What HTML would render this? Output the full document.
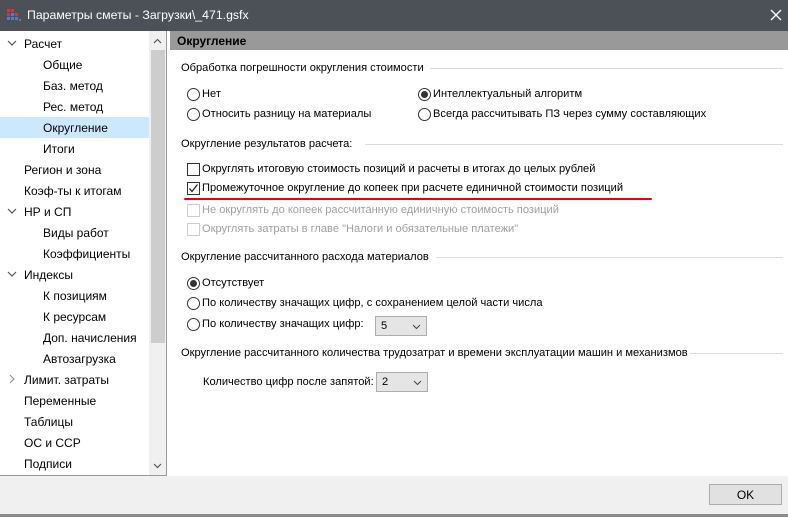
<!DOCTYPE html>
<html><head><meta charset="utf-8"><style>
*{margin:0;padding:0;box-sizing:border-box}
body{width:788px;height:517px;position:relative;overflow:hidden;background:#fff;font-family:"Liberation Sans","DejaVu Sans",sans-serif;font-size:11.1px;color:#000}
.a{position:absolute;white-space:nowrap}
.title{left:0;top:0;width:788px;height:31px;background:#4b5157;color:#fff;font-size:12.3px}
.tree{left:0;top:31px;width:167px;height:445px;border-right:1px solid #999;border-bottom:1px solid #999}
.sb{left:149px;top:31px;width:17px;height:444px;background:#f0f0f0}
.thumb{left:151px;top:50px;width:14px;height:293px;background:#cdcdcd}
.t{font-size:12px}
.hdr{left:170px;top:31px;width:618px;height:19px;background:#999;font-weight:bold;font-size:12px;padding:3px 7px}
.line{height:1px;background:#dcdcdc}
.rb{width:13px;height:13px;border:1px solid #333;border-radius:50%;background:#fff}
.rb.on::after{content:"";position:absolute;left:2px;top:2px;width:7px;height:7px;border-radius:50%;background:#333}
.cb{width:13px;height:13px;border:1px solid #333;background:#fff}
.cb.dis{border-color:#ccc}
.dis{color:#a0a0a0}
.sel{width:52px;height:20px;background:#e5e5e5;border:1px solid #adadad;padding:3px 5px}
.bottom{left:0;top:476px;width:788px;height:41px;background:#f0f0f0}
.ok{left:709px;top:484px;width:73px;height:21px;background:#e1e1e1;border:1px solid #adadad;text-align:center;padding-top:3px;font-size:12px}
</style></head><body>
<div class="a title">
 <svg class="a" style="left:7px;top:9px" width="14" height="13"><g fill="#d33"><rect x="0" y="0" width="3" height="3"/><rect x="4" y="0" width="3" height="3"/><rect x="0" y="4" width="3" height="3"/><rect x="8" y="4" width="3" height="3"/></g><g fill="#4a7fd8"><rect x="4" y="4" width="3" height="3"/><rect x="0" y="8" width="3" height="3"/><rect x="4" y="8" width="3" height="3"/><rect x="8" y="8" width="3" height="3"/><rect x="12" y="10" width="2" height="2"/></g></svg>
 <span class="a" style="left:27px;top:8px">Параметры сметы - Загрузки\_471.gsfx</span>
 <svg class="a" style="left:770px;top:9px" width="12" height="12"><path d="M1 1L11 11M11 1L1 11" stroke="#fff" stroke-width="1.3"/></svg>
</div>
<div class="a tree"></div>
<div class="a" style="left:0;top:117px;width:149px;height:21px;background:#cce8ff"></div>
<div class="a sb"></div><div class="a thumb"></div>
<svg class="a" style="left:153px;top:38px" width="9" height="6"><path d="M1 5L4.5 1.5L8 5" stroke="#555" fill="none" stroke-width="1.2"/></svg>
<svg class="a" style="left:153px;top:463px" width="9" height="6"><path d="M1 1L4.5 4.5L8 1" stroke="#555" fill="none" stroke-width="1.2"/></svg>
<svg class="a" style="left:7px;top:40px" width="10" height="7"><path d="M1 1L5 5L9 1" stroke="#555" fill="none" stroke-width="1.2"/></svg>
<svg class="a" style="left:7px;top:208px" width="10" height="7"><path d="M1 1L5 5L9 1" stroke="#555" fill="none" stroke-width="1.2"/></svg>
<svg class="a" style="left:7px;top:271px" width="10" height="7"><path d="M1 1L5 5L9 1" stroke="#555" fill="none" stroke-width="1.2"/></svg>
<svg class="a" style="left:9px;top:374px" width="7" height="10"><path d="M1 1L5 5L1 9" stroke="#999" fill="none" stroke-width="1.2"/></svg>
<span class="a t" style="left:24px;top:37px">Расчет</span>
<span class="a t" style="left:43px;top:58px">Общие</span>
<span class="a t" style="left:43px;top:79px">Баз. метод</span>
<span class="a t" style="left:43px;top:100px">Рес. метод</span>
<span class="a t" style="left:43px;top:121px">Округление</span>
<span class="a t" style="left:43px;top:142px">Итоги</span>
<span class="a t" style="left:24px;top:163px">Регион и зона</span>
<span class="a t" style="left:24px;top:184px">Коэф-ты к итогам</span>
<span class="a t" style="left:24px;top:205px">НР и СП</span>
<span class="a t" style="left:43px;top:226px">Виды работ</span>
<span class="a t" style="left:43px;top:247px">Коэффициенты</span>
<span class="a t" style="left:24px;top:268px">Индексы</span>
<span class="a t" style="left:43px;top:289px">К позициям</span>
<span class="a t" style="left:43px;top:310px">К ресурсам</span>
<span class="a t" style="left:43px;top:331px">Доп. начисления</span>
<span class="a t" style="left:43px;top:352px">Автозагрузка</span>
<span class="a t" style="left:24px;top:373px">Лимит. затраты</span>
<span class="a t" style="left:24px;top:394px">Переменные</span>
<span class="a t" style="left:24px;top:415px">Таблицы</span>
<span class="a t" style="left:24px;top:436px">ОС и ССР</span>
<span class="a t" style="left:24px;top:457px">Подписи</span>

<div class="a hdr">Округление</div>

<span class="a" style="left:181px;top:62px">Обработка погрешности округления стоимости</span>
<div class="a line" style="left:430px;top:68px;width:353px"></div>
<div class="a rb" style="left:187px;top:88px"></div><span class="a" style="left:202px;top:88px">Нет</span>
<div class="a rb" style="left:187px;top:108px"></div><span class="a" style="left:202px;top:108px">Относить разницу на материалы</span>
<div class="a rb on" style="left:418px;top:88px"></div><span class="a" style="left:433px;top:88px">Интеллектуальный алгоритм</span>
<div class="a rb" style="left:418px;top:108px"></div><span class="a" style="left:433px;top:108px">Всегда рассчитывать ПЗ через сумму составляющих</span>

<span class="a" style="left:181px;top:138px">Округление результатов расчета:</span>
<div class="a line" style="left:365px;top:144px;width:418px"></div>
<div class="a cb" style="left:187px;top:163px"></div><span class="a" style="left:202px;top:163px">Округлять итоговую стоимость позиций и расчеты в итогах до целых рублей</span>
<div class="a cb" style="left:187px;top:182px"></div>
<svg class="a" style="left:188px;top:183px" width="11" height="11"><path d="M1.5 5.5L4 8.5L9.5 1.5" stroke="#222" fill="none" stroke-width="1.3"/></svg>
<span class="a" style="left:202px;top:182px">Промежуточное округление до копеек при расчете единичной стоимости позиций</span>
<div class="a" style="left:184px;top:198px;width:468px;height:2px;background:#e00;border-radius:1px"></div>
<div class="a cb dis" style="left:187px;top:204px"></div><span class="a dis" style="left:202px;top:204px">Не округлять до копеек рассчитанную единичную стоимость позиций</span>
<div class="a cb dis" style="left:187px;top:223px"></div><span class="a dis" style="left:202px;top:223px">Округлять затраты в главе "Налоги и обязательные платежи"</span>

<span class="a" style="left:181px;top:251px">Округление рассчитанного расхода материалов</span>
<div class="a line" style="left:436px;top:257px;width:347px"></div>
<div class="a rb on" style="left:187px;top:277px"></div><span class="a" style="left:202px;top:277px">Отсутствует</span>
<div class="a rb" style="left:187px;top:297px"></div><span class="a" style="left:202px;top:297px">По количеству значащих цифр, с сохранением целой части числа</span>
<div class="a rb" style="left:187px;top:318px"></div><span class="a" style="left:202px;top:318px">По количеству значащих цифр:</span>
<div class="a sel" style="left:375px;top:316px">5</div>
<svg class="a" style="left:412px;top:324px" width="9" height="6"><path d="M1 1L4.5 4.5L8 1" stroke="#444" fill="none"/></svg>

<span class="a" style="left:181px;top:347px">Округление рассчитанного количества трудозатрат и времени эксплуатации машин и механизмов</span>
<div class="a line" style="left:690px;top:353px;width:93px"></div>
<span class="a" style="left:203px;top:376px">Количество цифр после запятой:</span>
<div class="a sel" style="left:376px;top:372px">2</div>
<svg class="a" style="left:413px;top:380px" width="9" height="6"><path d="M1 1L4.5 4.5L8 1" stroke="#444" fill="none"/></svg>

<div class="a bottom"></div>
<div class="a ok">OK</div>
<div class="a" style="left:0;top:514px;width:788px;height:3px;background:#8a8a8a"></div>
</body></html>
